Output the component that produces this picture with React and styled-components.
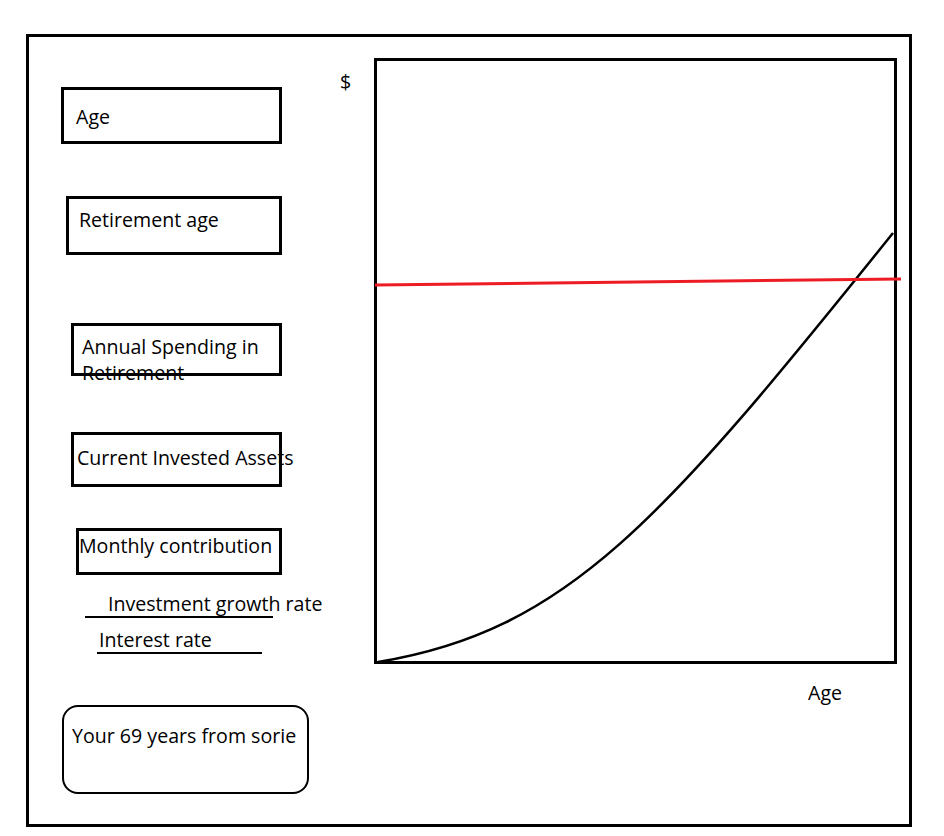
import styled, { createGlobalStyle } from "styled-components";

const GlobalStyle = createGlobalStyle`
  html, body {
    margin: 0;
    padding: 0;
    background: #fff;
  }
  body {
    font-family: "Open Sans", "Noto Sans", sans-serif;
    color: #000;
  }
`;

const Frame = styled.div`
  box-sizing: border-box;
  margin: 34px 0 0 26px;
  width: 886px;
  height: 793px;
  border: 3px solid #000;
  display: flex;
  flex-direction: column;
`;

const Top = styled.div`
  display: flex;
  padding-top: 21px;
`;

const Fields = styled.div`
  width: 311px;
  display: flex;
  flex-direction: column;
`;

const Field = styled.div`
  box-sizing: border-box;
  margin-top: ${(p) => p.$top}px;
  margin-left: ${(p) => p.$indent}px;
  width: ${(p) => p.$w}px;
  height: ${(p) => p.$h}px;
  border: 3px solid #000;
  padding: ${(p) => p.$padTop}px 0 0 ${(p) => p.$padLeft}px;
  font-size: 19.6px;
  line-height: 26px;
  white-space: nowrap;
`;

const WrapText = styled.span`
  display: block;
  white-space: normal;
`;

const LineField = styled.div`
  margin-top: ${(p) => p.$top}px;
  margin-left: ${(p) => p.$indent}px;
  width: ${(p) => p.$w}px;
  border-bottom: 2px solid #000;
  padding-left: ${(p) => p.$padLeft}px;
  font-size: 19.6px;
  line-height: 24px;
  white-space: nowrap;
`;

const ChartColumn = styled.div`
  display: flex;
  flex-direction: column;
`;

const ChartRow = styled.div`
  display: flex;
`;

const YLabel = styled.div`
  width: 34px;
  margin-top: 12px;
  font-size: 19.6px;
  line-height: 24px;
`;

const ChartBox = styled.div`
  box-sizing: border-box;
  width: 523px;
  height: 606px;
  border: 3px solid #000;
`;

const Plot = styled.svg`
  display: block;
  width: 100%;
  height: 100%;
  overflow: visible;
`;

const XLabel = styled.div`
  margin: 17px 0 0 468px;
  font-size: 19.6px;
  line-height: 24px;
`;

const Summary = styled.div`
  box-sizing: border-box;
  margin-left: 33px;
  width: 247px;
  height: 89px;
  border: 2px solid #000;
  border-radius: 16px;
  padding: 17px 0 0 8px;
  font-size: 19.6px;
  line-height: 24px;
  white-space: nowrap;
`;

const fields = [
  { label: "Age", top: 29, indent: 32, w: 221, h: 57, padTop: 14, padLeft: 12 },
  { label: "Retirement age", top: 52, indent: 37, w: 216, h: 59, padTop: 8, padLeft: 10 },
  { label: "Annual Spending in Retirement", top: 68, indent: 42, w: 211, h: 53, padTop: 8, padLeft: 8, wrap: true },
  { label: "Current Invested Assets", top: 56, indent: 42, w: 211, h: 55, padTop: 10, padLeft: 3 },
  { label: "Monthly contribution", top: 41, indent: 47, w: 206, h: 47, padTop: 2, padLeft: 0 },
];

const lineFields = [
  { label: "Investment growth rate", top: 17, indent: 56, w: 165, padLeft: 23 },
  { label: "Interest rate", top: 10, indent: 68, w: 163, padLeft: 2 },
];

const App = () => {
  return (
    <>
      <GlobalStyle />
      <Frame>
        <Top>
          <Fields>
            {fields.map((f) => (
              <Field
                key={f.label}
                $top={f.top}
                $indent={f.indent}
                $w={f.w}
                $h={f.h}
                $padTop={f.padTop}
                $padLeft={f.padLeft}
              >
                {f.wrap ? <WrapText>{f.label}</WrapText> : f.label}
              </Field>
            ))}
            {lineFields.map((f) => (
              <LineField
                key={f.label}
                $top={f.top}
                $indent={f.indent}
                $w={f.w}
                $padLeft={f.padLeft}
              >
                {f.label}
              </LineField>
            ))}
          </Fields>
          <ChartColumn>
            <ChartRow>
              <YLabel>$</YLabel>
              <ChartBox>
                <Plot viewBox="0 0 517 600" preserveAspectRatio="none">
                  <path
                    d="M1 601 C 190 570, 285 460, 516 172"
                    fill="none"
                    stroke="#000"
                    strokeWidth="2.5"
                  />
                  <line
                    x1="-2"
                    y1="224"
                    x2="524"
                    y2="218"
                    stroke="#ed1c24"
                    strokeWidth="3"
                  />
                </Plot>
              </ChartBox>
            </ChartRow>
            <XLabel>Age</XLabel>
          </ChartColumn>
        </Top>
        <Summary>Your 69 years from sorie</Summary>
      </Frame>
    </>
  );
};

export default App;
